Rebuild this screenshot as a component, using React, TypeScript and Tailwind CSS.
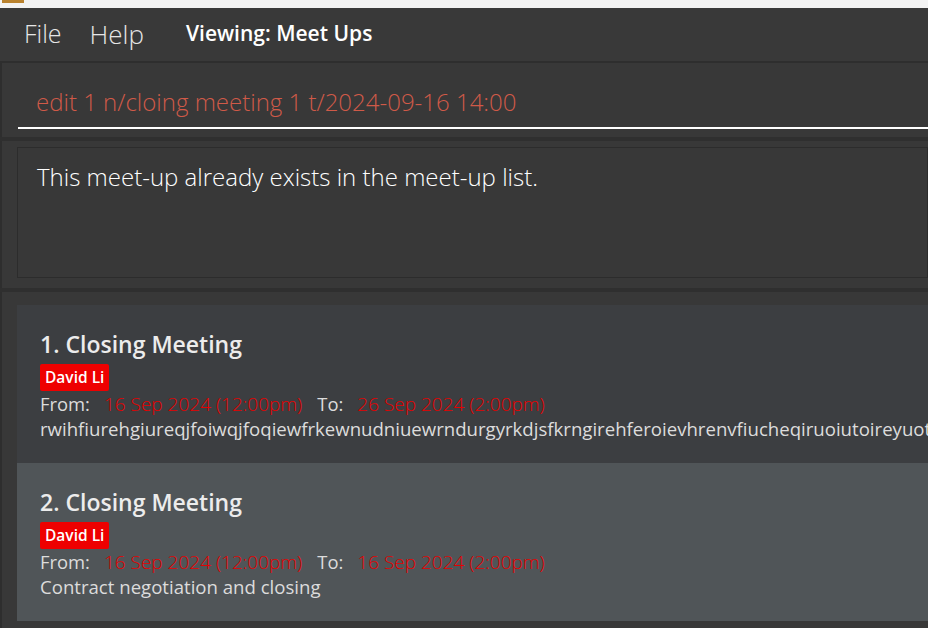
import React from 'react';

type MeetUp = {
  name: string;
  buyer: string;
  from: string;
  to: string;
  info: string;
};

const meetUps: MeetUp[] = [
  {
    name: 'Closing Meeting',
    buyer: 'David Li',
    from: '16 Sep 2024 (12:00pm)',
    to: '26 Sep 2024 (2:00pm)',
    info: 'rwihfiurehgiureqjfoiwqjfoqiewfrkewnudniuewrndurgyrkdjsfkrngirehferoievhrenvfiucheqiruoiutoireyuotewqiuroiewquroiqwe',
  },
  {
    name: 'Closing Meeting',
    buyer: 'David Li',
    from: '16 Sep 2024 (12:00pm)',
    to: '16 Sep 2024 (2:00pm)',
    info: 'Contract negotiation and closing',
  },
];

const font = { fontFamily: '"Open Sans", "Noto Sans", sans-serif' };

const MeetUpCard: React.FC<{ m: MeetUp; index: number }> = ({ m, index }) => (
  <div
    className={`h-[158px] pl-[23px] pt-[24px] overflow-hidden whitespace-nowrap ${
      index % 2 === 0 ? 'bg-[#3c3e41]' : 'bg-[#505558]'
    }`}
  >
    <div className="h-[30px] text-[23px] leading-[30px] font-semibold text-[#ececec]">
      {index + 1}. {m.name}
    </div>
    <div className="mt-[5px] flex">
      <span className="h-[27px] flex items-center bg-[#ee0000] text-white text-[15.5px] font-semibold px-[5px] rounded-[2px]">
        {m.buyer}
      </span>
    </div>
    <div className="h-[26px] text-[18.4px] leading-[26px] text-[#dcdcdc]">
      <span>From:</span>
      <span className="ml-[14px] text-[19px] font-light text-[#e60000]">{m.from}</span>
      <span className="ml-[15px]">To:</span>
      <span className="ml-[14px] text-[19px] font-light text-[#e60000]">{m.to}</span>
    </div>
    <div className="h-[24px] text-[18.6px] leading-[24px] text-[#dcdcdc]">{m.info}</div>
  </div>
);

export default function App() {
  return (
    <div className="w-[928px] h-[628px] overflow-hidden bg-[#383838] flex flex-col" style={font}>
      {/* window title strip */}
      <div className="h-[8px] bg-[#f2f2f2] flex items-start shrink-0">
        <div className="ml-[2px] w-[22px] h-[3px] bg-[#b9822e]" />
      </div>

      {/* menu bar */}
      <div className="h-[55px] bg-[#393939] flex items-center shrink-0 border-b-2 border-[#2e2e2e] pb-[1px]">
        <span className="ml-[24px] text-[25px] font-light text-[#e6e6e6]">File</span>
        <span className="ml-[28px] text-[26px] font-light text-[#e6e6e6]">Help</span>
        <span className="ml-[42px] text-[21px] font-semibold text-white">Viewing: Meet Ups</span>
      </div>

      {/* command box */}
      <div className="h-[74px] bg-[#383838] border-l-2 border-[#2e2e2e] shrink-0 flex flex-col">
        <div className="ml-[16px] h-[66px] border-b-2 border-white flex items-end pb-[8px] pl-[18px]">
          <span className="text-[24px] font-light text-[#d05a48] leading-[34px]">
            edit 1 n/cloing meeting 1 t/2024-09-16 14:00
          </span>
        </div>
      </div>

      <div className="h-[4px] bg-[#2f2f2f] shrink-0" />

      {/* result display */}
      <div className="h-[147px] border-l-2 border-[#2e2e2e] bg-[#383838] pt-[6px] pb-[10px] shrink-0">
        <div className="ml-[15px] h-full border border-[#2c2c2c] bg-[#383838] pl-[19px] pt-[13px]">
          <span className="text-[24px] font-light text-white leading-[32px]">
            This meet-up already exists in the meet-up list.
          </span>
        </div>
      </div>

      <div className="h-[4px] bg-[#2f2f2f] shrink-0" />

      {/* list */}
      <div className="flex-1 border-l-2 border-[#2e2e2e] bg-[#383838] pt-[13px]">
        <div className="ml-[15px] flex flex-col">
          {meetUps.map((m, i) => (
            <MeetUpCard key={i} m={m} index={i} />
          ))}
        </div>
      </div>
    </div>
  );
}
